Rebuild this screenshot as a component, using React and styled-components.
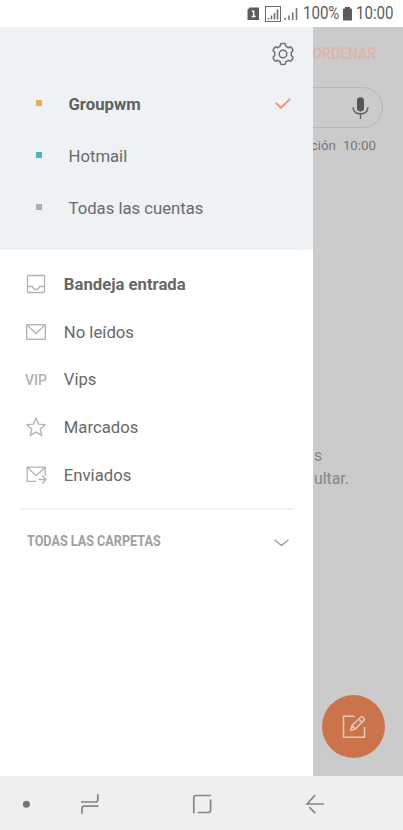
import styled, { createGlobalStyle } from 'styled-components'

const accounts = [
  { name: 'Groupwm', color: '#ebaa4d', selected: true },
  { name: 'Hotmail', color: '#4db5c4' },
  { name: 'Todas las cuentas', color: '#adadad' }
]

const folders = [
  { name: 'Bandeja entrada', icon: <InboxIcon />, active: true },
  { name: 'No leídos', icon: <MailIcon /> },
  { name: 'Vips', icon: <VipLabel /> },
  { name: 'Marcados', icon: <StarIcon /> },
  { name: 'Enviados', icon: <SentIcon /> }
]

export default function App() {
  return (
    <Phone>
      <GlobalStyle />
      <StatusBar>
        <StatusIcons />
        <StatusText $width={36}>100%</StatusText>
        <BatteryIcon />
        <StatusText $width={37}>10:00</StatusText>
      </StatusBar>

      <Main>
        <Drawer>
          <Accounts>
            <SettingsRow>
              <GearIcon />
            </SettingsRow>
            {accounts.map(account => (
              <AccountRow key={account.name}>
                <Marker $color={account.color} />
                <AccountName $bold={account.selected}>{account.name}</AccountName>
                {account.selected && <CheckIcon />}
              </AccountRow>
            ))}
          </Accounts>

          <Folders>
            {folders.map(folder => (
              <FolderRow key={folder.name}>
                <IconSlot>{folder.icon}</IconSlot>
                <FolderName $bold={folder.active}>{folder.name}</FolderName>
              </FolderRow>
            ))}
          </Folders>

          <Divider />

          <AllFolders>
            <AllFoldersLabel>TODAS LAS CARPETAS</AllFoldersLabel>
            <ChevronIcon />
          </AllFolders>
        </Drawer>

        <Mailbox>
          <SortButton>ORDENAR</SortButton>
          <SearchBox>
            <MicIcon />
          </SearchBox>
          <SyncTime>
            <span>ción</span>
            <span>10:00</span>
          </SyncTime>
          <EmptyText>
            <span>s</span>
            <span>ultar.</span>
          </EmptyText>
          <ComposeButton>
            <ComposeIcon />
          </ComposeButton>
        </Mailbox>
      </Main>

      <NavBar>
        <NavIcons />
      </NavBar>
    </Phone>
  )
}

function StatusIcons() {
  return (
    <svg width='52' height='18' viewBox='0 0 52 18'>
      <path d='M2.7 2.5H12V15H0.5V4.7Z' fill='#5c5c5c' />
      <path d='M4.8 6.3H6.7V12M4.6 11.5H8.6' fill='none' stroke='#fff' strokeWidth='1.4' />
      <rect x='18.5' y='1.5' width='15' height='15' fill='none' stroke='#6b6b6b' />
      <path d='M21.5 14.5V13M24.5 14.5V10.5M27.5 14.5V8M30.5 14.5V4.5' stroke='#707070' strokeWidth='1.6' />
      <path d='M38 15V13M42 15V10.5M45.7 15V7.5M49.5 15V3' stroke='#777' strokeWidth='1.6' />
    </svg>
  )
}

function BatteryIcon() {
  return (
    <svg width='9' height='14' viewBox='0 0 9 14'>
      <path d='M2 0H7V1.4H8.2Q9 1.4 9 2.2V13.4H0V2.2Q0 1.4 0.8 1.4H2Z' fill='#5c5c5c' />
    </svg>
  )
}

function GearIcon() {
  return (
    <svg width='24' height='24' viewBox='0 0 24 24' fill='none' stroke='#6f7274' strokeWidth='1.5' strokeLinejoin='round'>
      <path d='M10.6 1.6H13.4Q14.3 1.6 14.5 2.5L14.8 4.2Q16.2 4.7 17.3 5.7L19 5Q19.9 4.7 20.4 5.5L21.8 7.9Q22.2 8.7 21.5 9.3L20.2 10.4Q20.5 12 20.2 13.6L21.5 14.7Q22.2 15.3 21.8 16.1L20.4 18.5Q19.9 19.3 19 19L17.3 18.3Q16.2 19.3 14.8 19.8L14.5 21.5Q14.3 22.4 13.4 22.4H10.6Q9.7 22.4 9.5 21.5L9.2 19.8Q7.8 19.3 6.7 18.3L5 19Q4.1 19.3 3.6 18.5L2.2 16.1Q1.8 15.3 2.5 14.7L3.8 13.6Q3.5 12 3.8 10.4L2.5 9.3Q1.8 8.7 2.2 7.9L3.6 5.5Q4.1 4.7 5 5L6.7 5.7Q7.8 4.7 9.2 4.2L9.5 2.5Q9.7 1.6 10.6 1.6Z' />
      <circle cx='12' cy='12' r='3.8' />
    </svg>
  )
}

function CheckIcon() {
  return (
    <svg width='16' height='12' viewBox='0 0 16 12' fill='none' stroke='#f49a72' strokeWidth='2.1'>
      <path d='M0.8 4.7L6 9.7L15.2 0.8' />
    </svg>
  )
}

function InboxIcon() {
  return (
    <Outline width='20' height='20' viewBox='0 0 20 20'>
      <rect x='1.5' y='1.5' width='17' height='17' rx='0.8' />
      <path d='M1.5 12.5H6.4Q7.2 15.5 10 15.5T13.6 12.5H18.5' />
    </Outline>
  )
}

function MailIcon() {
  return (
    <Outline width='20' height='16' viewBox='0 0 20 16'>
      <rect x='0.7' y='0.7' width='18.6' height='14.6' />
      <path d='M1 1L10 9.5L19 1' />
    </Outline>
  )
}

function VipLabel() {
  return <Vip>VIP</Vip>
}

function StarIcon() {
  return (
    <Outline width='20' height='20' viewBox='0 0 20 20'>
      <path d='M10 1.2L12.6 7.1L19 7.7L14.2 12L15.6 18.4L10 15.1L4.4 18.4L5.8 12L1 7.7L7.4 7.1Z' />
    </Outline>
  )
}

function SentIcon() {
  return (
    <Outline width='21' height='18' viewBox='0 0 21 18'>
      <path d='M10 15.3H1.2V1.2H19.2V9.5M1.5 1.5L10.2 9.7L18.9 1.5M12 13.5H20M16.3 9.8L20 13.5L16.3 17.2' />
    </Outline>
  )
}

function ChevronIcon() {
  return (
    <svg width='15' height='8' viewBox='0 0 15 8' fill='none' stroke='#a0a0a0' strokeWidth='1.5'>
      <path d='M0.6 0.8L7.5 6.6L14.4 0.8' />
    </svg>
  )
}

function MicIcon() {
  return (
    <svg width='17' height='22' viewBox='0 0 17 22'>
      <rect x='5' y='0.2' width='7' height='14.2' rx='3.3' fill='#565656' />
      <path d='M1 10.3C1.5 14.4 4.5 16.8 8.5 16.8S15.5 14.4 16 10.3M8.5 16.8V22' fill='none' stroke='#606060' strokeWidth='1.4' />
    </svg>
  )
}

function ComposeIcon() {
  return (
    <svg width='24' height='24' viewBox='0 0 24 24' fill='none' stroke='#e3cbbf' strokeWidth='1.5'>
      <path d='M12.5 1.3H1.5V22.3H22.5V12' />
      <path d='M8.8 15.2L10 10.6L18.8 2Q19.7 1.2 20.6 2L22 3.4Q22.8 4.3 22 5.2L13.3 14L8.8 15.2ZM10 10.6L13.3 14M16.7 4.1L20 7.3' />
    </svg>
  )
}

function NavIcons() {
  return (
    <svg width='403' height='54' viewBox='0 0 403 54' fill='none' stroke='#858585' strokeWidth='1.7'>
      <circle cx='26.4' cy='28.2' r='3.5' fill='#757575' stroke='none' />
      <path d='M81 26H95.5Q97.8 26 97.8 23.7V18M98.4 30.2H84.3Q82 30.2 82 32.5V37.8' />
      <path d='M211 19.5H196Q193.8 19.5 193.8 21.7V37.2M210.6 23.5V34.2Q210.6 36.5 208.3 36.5H197.8' />
      <path d='M324 28H307.2L315.2 19M309.3 31.2L315.2 37.2' />
    </svg>
  )
}

const GlobalStyle = createGlobalStyle`
  body {
    margin: 0;
    font-family: Roboto, "Liberation Sans", sans-serif;
  }

  svg {
    display: block;
    flex-shrink: 0;
  }
`

const Phone = styled.div`
  width: 403px;
  height: 830px;
  display: flex;
  flex-direction: column;
  overflow: hidden;
  background: #fff;
`

const StatusBar = styled.header`
  height: 27px;
  box-sizing: border-box;
  padding-right: 10px;
  display: flex;
  align-items: center;
  justify-content: flex-end;
  gap: 4px;
`

const StatusText = styled.span`
  width: ${props => props.$width}px;
  font-size: 17.5px;
  line-height: 27px;
  color: #5f5f5f;
  transform: scaleX(0.86);
  transform-origin: left;
`

const Main = styled.div`
  height: 749px;
  display: flex;
`

const Drawer = styled.aside`
  width: 313.3px;
  flex-shrink: 0;
  background: #fff;
`

const Accounts = styled.div`
  height: 223px;
  background: #eef2f5;
`

const SettingsRow = styled.div`
  height: 51px;
  padding: 15px 18px 0 0;
  box-sizing: border-box;
  display: flex;
  justify-content: flex-end;
`

const AccountRow = styled.div`
  height: 52px;
  padding: 0 22px 0 35.5px;
  display: flex;
  align-items: center;
`

const Marker = styled.i`
  width: 6px;
  height: 6px;
  margin: 0 27px 2px 0;
  background: ${props => props.$color};
`

const AccountName = styled.span`
  flex: 1;
  font-size: 16.7px;
  font-weight: ${props => props.$bold ? 700 : 400};
  color: ${props => props.$bold ? '#606060' : '#6b6b6b'};
`

const Folders = styled.nav`
  padding-top: 10.5px;
`

const FolderRow = styled.div`
  height: 47.7px;
  padding-left: 23.5px;
  display: flex;
  align-items: center;
`

const IconSlot = styled.div`
  width: 25px;
  margin-right: 15.3px;
  display: flex;
  justify-content: center;
`

const FolderName = styled.span`
  font-size: 16.7px;
  font-weight: ${props => props.$bold ? 700 : 400};
  color: #686868;
`

const Outline = styled.svg`
  fill: none;
  stroke: #b3b3b3;
  stroke-width: 1.3;
`

const Vip = styled.span`
  font-size: 14px;
  font-weight: 500;
  color: #b0b0b0;
`

const Divider = styled.hr`
  height: 2px;
  margin: 9px 20px 0;
  border: 0;
  background: #efefef;
`

const AllFolders = styled.div`
  height: 66px;
  padding: 0 24px 0 27px;
  display: flex;
  align-items: center;
  justify-content: space-between;
`

const AllFoldersLabel = styled.span`
  padding-bottom: 2px;
  font-size: 14.5px;
  font-weight: 700;
  color: #a0a0a0;
  white-space: nowrap;
  transform: scaleX(0.87);
  transform-origin: left;
`

const Mailbox = styled.section`
  flex: 1;
  min-width: 0;
  display: flex;
  flex-direction: column;
  align-items: flex-end;
  overflow: hidden;
  background: #cbcbcb;
`

const SortButton = styled.span`
  margin: 17px 27px 0 0;
  font-size: 16px;
  line-height: 20px;
  font-weight: 700;
  color: #d8b8ab;
  transform: scaleX(0.87);
  transform-origin: right;
`

const SearchBox = styled.div`
  width: 350px;
  height: 41px;
  margin: 23px 20px 0 0;
  padding-right: 13px;
  box-sizing: border-box;
  display: flex;
  flex-shrink: 0;
  align-items: center;
  justify-content: flex-end;
  border: 1px solid #b7b7b7;
  border-radius: 21px;
`

const SyncTime = styled.div`
  margin: 10px 27px 0 0;
  display: flex;
  gap: 7px;
  font-size: 13.3px;
  line-height: 16px;
  color: #777;
`

const EmptyText = styled.p`
  width: 89px;
  margin: 290px 0 0;
  display: flex;
  flex-direction: column;
  font-size: 15.8px;
  line-height: 23px;
  color: #868686;
`

const ComposeButton = styled.div`
  width: 63px;
  height: 63px;
  margin: auto 18px 18px 0;
  display: flex;
  flex-shrink: 0;
  align-items: center;
  justify-content: center;
  border-radius: 50%;
  background: #cb734b;
`

const NavBar = styled.footer`
  height: 54px;
  background: #efefef;
`
